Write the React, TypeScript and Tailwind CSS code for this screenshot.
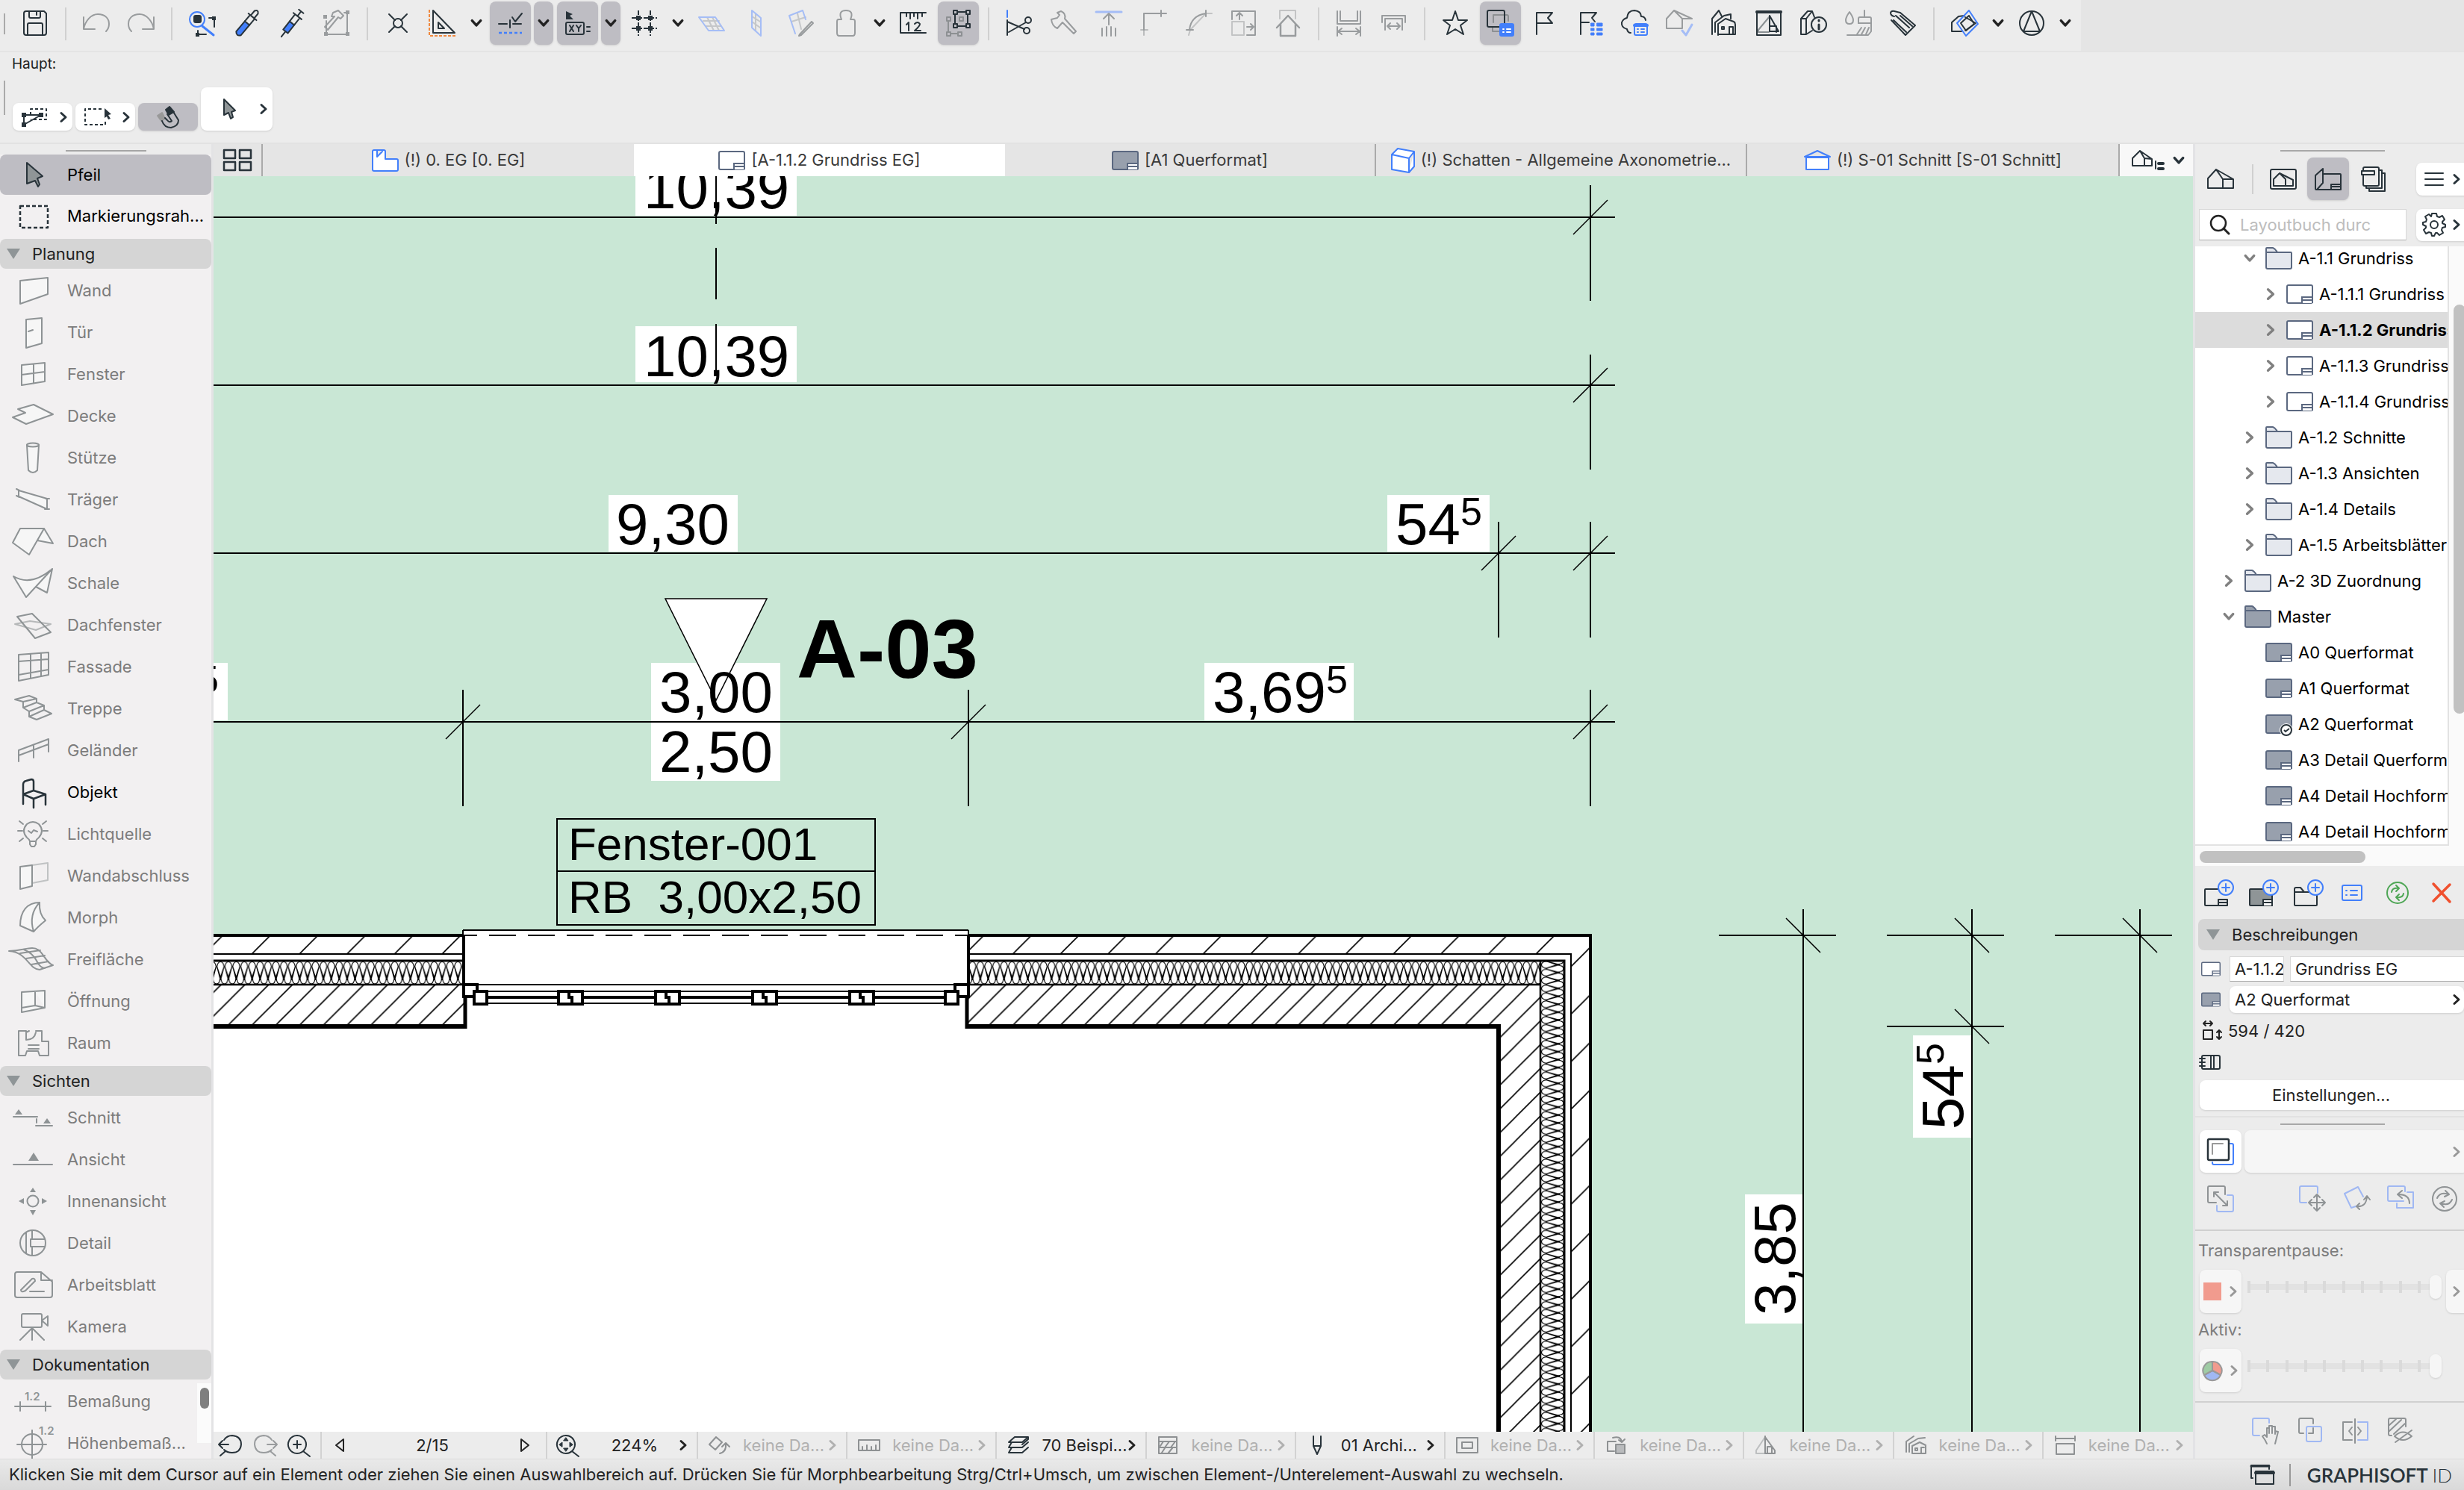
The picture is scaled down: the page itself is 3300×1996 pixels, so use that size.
import type { ReactNode } from "react";

type IconProps = { children: ReactNode; box?: string; className?: string };

function Icon({ children, box = "0 0 36 36", className = "w-9 h-9" }: IconProps) {
  return (
    <svg
      viewBox={box}
      className={`${className} shrink-0 overflow-visible`}
      fill="none"
      stroke="currentColor"
      strokeWidth="2"
      strokeLinejoin="round"
      strokeLinecap="round"
      aria-hidden="true"
    >
      {children}
    </svg>
  );
}

const BLUE = "#427ffb";
const GRAY = "#999c9e";
const DARK = "#28333a";

function Chevron({ down = false, className = "w-3 h-3.5" }: { down?: boolean; className?: string }) {
  return (
    <Icon box="0 0 12 14" className={className}>
      <path d={down ? "M1 4 L6 9.5 L11 4" : "M3 1.5 L9 7 L3 12.5"} strokeWidth="3" />
    </Icon>
  );
}

/* ---------- top toolbar ---------- */

type Tool = { kind?: "icon" | "chev" | "sep"; name?: string; on?: boolean; off?: boolean; art?: ReactNode };

const sep: Tool = { kind: "sep" };
const chev: Tool = { kind: "chev", name: "Optionen" };

const tools: Tool[] = [
  {
    name: "Sichern",
    art: (
      <path d="M6 2H30L33 5V31Q33 34 30 34H6Q3 34 3 31V5Q3 2 6 2ZM10 2V9Q10 11 12 11H23Q25 11 25 9V2M20 3V7M8 34V20Q8 18 10 18H26Q28 18 28 20V34" />
    ),
  },
  sep,
  { name: "Widerrufen", off: true, art: <path d="M1 10V26H16M1 26C3 15 11 6 20 6C30 6 35 12 35 19Q35 25 31 29" /> },
  { name: "Wiederholen", off: true, art: <path d="M35 10V26H20M35 26C33 15 25 6 16 6C6 6 1 12 1 19Q1 25 5 29" /> },
  sep,
  {
    name: "Suchen und Aktivieren",
    art: (
      <>
        <circle cx="11" cy="13" r="10" stroke={BLUE} />
        <path d="M18 22L33 34" stroke={BLUE} strokeWidth="3" />
        <rect x="7" y="8" width="9" height="9" rx="2" fill={DARK} />
        <path d="M27 11H34V23M12 28V33H23" />
        <path d="M31 9H36V14H31ZM9 31H14V36H9Z" fill={DARK} stroke="none" />
      </>
    ),
  },
  {
    name: "Parameter aufnehmen",
    art: (
      <g transform="rotate(40 18 18)">
        <path d="M14 18H22V36Q18 41 14 36Z" fill={BLUE} />
        <path d="M14 18V7H22V18M11 7H25M15 7V-1Q18 -6 21 -1V7" />
      </g>
    ),
  },
  {
    name: "Parameter übertragen",
    art: (
      <g transform="rotate(38 18 18)">
        <path d="M14 18H22V32H14Z" fill={BLUE} />
        <path d="M14 18V6H22V18M11 6H25M18 6V-2M14 -2H22M18 32V41" />
      </g>
    ),
  },
  {
    name: "Favorit anwenden",
    off: true,
    art: (
      <>
        <path d="M13 4L20 1L27 8L23 12L20 10L6 27L2 23L15 9L11 9Z" />
        <path d="M4 15V33H32V4H28M32 33V4" />
        <path d="M0 7H5V12H0ZM1 30H6V35H1ZM30 30H35V35H30ZM30 1H35V6H30Z" fill={GRAY} stroke="none" />
      </>
    ),
  },
  sep,
  { name: "Fangpunkte", art: <><circle cx="18" cy="18" r="6" /><path d="M6 6L14 14M30 6L22 14M6 30L14 22M30 30L22 22" /></> },
  {
    name: "Hilfslinien",
    art: (
      <>
        <path d="M5 1L34 31H5ZM12 17L20 25H12Z" />
        <path d="M0 0V35H36" stroke="#f0883e" strokeDasharray="4 2" strokeLinecap="butt" />
      </>
    ),
  },
  chev,
  {
    name: "Fangführung",
    on: true,
    art: (
      <>
        <path d="M3 19H14M22 19H33M18 14V24M21 10L25 16L34 5" />
        <path d="M3 31H34" stroke={BLUE} strokeDasharray="4 3" strokeLinecap="butt" strokeWidth="2.5" />
      </>
    ),
  },
  { ...chev, on: true },
  {
    name: "Tracker",
    on: true,
    art: (
      <>
        <path d="M3 2L12 6L8 8L13 13L3 13Z" fill={DARK} stroke="none" />
        <rect x="3" y="17" width="24" height="16" rx="2" />
        <path d="M8 21L13 29M13 21L8 29M17 21L20 25L23 21M20 25V29M31 23H35M31 29H35" />
      </>
    ),
  },
  { ...chev, on: true },
  {
    name: "Raster",
    art: (
      <>
        <path d="M10 1V35M26 1V35M1 11H35M1 25H35" strokeDasharray="6 2" strokeLinecap="butt" />
        <path d="M7 8H13V14H7ZM23 8H29V14H23ZM7 22H13V28H7ZM23 22H29V28H23Z" fill={DARK} stroke="none" />
      </>
    ),
  },
  chev,
  {
    name: "Bearbeitungsebene",
    off: true,
    art: (
      <>
        <path d="M7 15H28M10 22H31M12 10L21 28M19 10L28 28" stroke="#c5c7c9" />
        <path d="M1 10H23L35 28H14Z" stroke="#a5bdf6" />
      </>
    ),
  },
  {
    name: "Ebene vertikal",
    off: true,
    art: (
      <>
        <path d="M17 6V28M12 9L23 16M12 16L23 24" stroke="#c5c7c9" />
        <path d="M12 1L24 11V35L12 24Z" stroke="#a5bdf6" />
      </>
    ),
  },
  {
    name: "Ebene bearbeiten",
    off: true,
    art: (
      <>
        <path d="M5 16L24 10M13 5L18 26" stroke="#c5c7c9" />
        <path d="M10 32L2 8L20 1L24 13" stroke="#a5bdf6" />
        <path d="M32 16L16 33L15 35L18 34L34 18Z" />
      </>
    ),
  },
  { name: "Schwerkraft", off: true, art: <path d="M12 13Q7 1 18 1Q29 1 24 13H28Q30 13 30 16V31Q30 35 27 35H9Q6 35 6 31V16Q6 13 8 13Z" /> },
  chev,
  {
    name: "Maße",
    art: (
      <>
        <path d="M35 4H1V31H35M9 4V9M14 4V12M19 4V9M24 4V12M30 4V9" />
        <path d="M9 20L12 17V28M20 19Q24 15 27 19Q27 22 20 28H28" />
      </>
    ),
  },
  {
    name: "Transformationsrahmen",
    on: true,
    art: (
      <>
        <g stroke="#8d9093">
          <path d="M3 10H8V15H3ZM3 30H8V35H3ZM18 30H23V35H18ZM20 10H25V15H20ZM5 15V30M8 32H18" />
        </g>
        <path d="M12 1H17V6H12ZM29 1H34V6H29ZM12 19H17V24H12ZM29 19H34V24H29ZM17 3H29M17 22H29M14 6V19M31 6V19" />
      </>
    ),
  },
  sep,
  {
    name: "Trennen",
    art: (
      <>
        <path d="M2 1V10" stroke={BLUE} />
        <circle cx="30" cy="14" r="4" />
        <circle cx="28" cy="28" r="4" />
        <path d="M2 14V34M2 16L25 26M4 30L27 17" />
      </>
    ),
  },
  { name: "Spalten", off: true, art: <path d="M9 4L14 2Q21 5 19 12L34 29L31 32L16 17L9 25Q2 22 1 13L9 11L12 7Z" /> },
  {
    name: "Anpassen",
    off: true,
    art: (
      <>
        <path d="M1 3H35" stroke="#a5bdf6" strokeWidth="3" />
        <path d="M18 20V6M11 12L18 5L25 12M9 25V35M15 23V35M21 23V35M27 25V35" />
      </>
    ),
  },
  { name: "Verbinden", off: true, art: <><path d="M1 27H10M5 34V27" opacity="0.6" /><path d="M5 27V5H35M28 1V9" /></> },
  { name: "Abrunden", off: true, art: <><path d="M5 34L7 27L28 5H36" opacity="0.5" /><path d="M2 27H11M6 27Q8 8 28 5M28 1V9" /></> },
  {
    name: "Größe ändern",
    off: true,
    art: (
      <>
        <path d="M3 16H19V34H3Z" opacity="0.5" />
        <path d="M3 13V2H34V34H23M13 13V4M9 8L13 4L17 8M23 23H32M28 19L32 23L28 27" />
      </>
    ),
  },
  { name: "Dach trimmen", off: true, art: <><path d="M7 12V1H28V12" opacity="0.5" /><path d="M3 24L18 8L33 24M8 19V35H28V19" strokeWidth="2.5" /></> },
  sep,
  { name: "Ausrichten", off: true, art: <path d="M2 2V19H33V2M6 2V15H29V2M2 23V35M33 23V35M3 29H32M8 25L3 29L8 33M27 25L32 29L27 33" /> },
  { name: "Verteilen", off: true, art: <path d="M2 17V8H33V17M6 27V12H29V27M9 22H26M13 18L9 22L13 26M22 18L26 22L22 26" /> },
  sep,
  { name: "Favoriten", art: <path d="M18 2L22 14H34L25 21L29 33L18 26L7 33L11 21L2 14H14Z" /> },
  {
    name: "Elementinformation",
    on: true,
    art: (
      <>
        <path d="M17 7H9V17M9 7H27Q29 7 29 9V15" stroke="#8d9093" />
        <path d="M8 23V29H17" stroke="#8d9093" />
        <rect x="1" y="1" width="23" height="22" rx="2" />
        <rect x="18" y="19" width="18" height="16" rx="2" fill={BLUE} stroke={BLUE} />
        <path d="M22 26H23M27 26H32M22 30H23M27 30H32" stroke="#fff" />
      </>
    ),
  },
  { name: "Markierung", art: <path d="M7 33V4H28L22 11L28 18H8" /> },
  {
    name: "Markierungsliste",
    art: (
      <>
        <path d="M6 33V4H27L21 11L25 16M7 17H17" />
        <path d="M20 18H24V22H20ZM28 18H35V22H28ZM20 25H24V28H20ZM28 25H35V28H28ZM20 31H24V34H20ZM28 31H35V34H28Z" fill={BLUE} stroke={BLUE} strokeWidth="1" />
      </>
    ),
  },
  {
    name: "BIMcloud",
    art: (
      <>
        <path d="M13 31Q9 31 8 26Q0 24 1 17Q3 12 8 11Q9 1 18 1Q27 2 27 9Q32 9 33 14" />
        <rect x="18" y="19" width="17" height="15" rx="2" stroke={BLUE} />
        <path d="M18 21H35" stroke={BLUE} strokeWidth="4" />
        <path d="M22 26H23M27 26H31M22 30H23M27 30H31" stroke={BLUE} />
      </>
    ),
  },
  {
    name: "Modellprüfung",
    off: true,
    art: (
      <>
        <path d="M1 12L11 1L22 12V25H1ZM11 1L35 12L22 12" />
        <path d="M22 28L27 34L35 20" stroke="#a5bdf6" strokeWidth="3" />
      </>
    ),
  },
  { name: "Hausoptionen", art: <path d="M2 33V12L11 1L15 9M6 30V17L18 8L27 6V12M10 34V19L20 12L31 16Q33 17 33 20V33H10ZM15 23H18V26H15ZM25 33V23H30V33" /> },
  {
    name: "Grundriss-Vorschau",
    art: (
      <>
        <path d="M2 2H34V34H2Z" />
        <path d="M2 3H34" strokeWidth="4" />
        <path d="M19 9L4 27V30H18" opacity="0.5" />
        <path d="M19 8V29H31L19 8M19 22H28V30" />
      </>
    ),
  },
  {
    name: "Etagen-Info",
    art: (
      <>
        <path d="M1 12L10 2H16L8 12V33H1ZM1 12H8M16 2L19 10M8 33L16 28" />
        <circle cx="25" cy="20" r="10" />
        <path d="M25 14V15M25 20V26" strokeWidth="3" />
      </>
    ),
  },
  { name: "Oberfläche", off: true, art: <><path d="M6 3Q1 10 1 14Q1 19 6 19Q11 19 11 14Q11 10 6 3ZM26 1V10M18 18V12Q18 10 20 10H33Q35 10 35 12V29L31 34H3" /><path d="M18 18H35M22 24L16 33M27 24L22 33M32 24L28 33" /></> },
  { name: "Etiketten", art: <path d="M6 9Q1 8 1 4Q2 1 6 2M6 2L14 4L34 21L21 34L2 14M8 8L26 24M14 8L30 22M5 14L22 30" /> },
  sep,
  {
    name: "3D-Schnitt",
    art: (
      <>
        <path d="M10 9L1 17V29L14 29M10 9L18 8M19 10L33 18L19 28" />
        <path d="M24 1L36 19L20 35L8 18Z" stroke={BLUE} />
        <path d="M24 8L31 19L20 28L13 18Z" />
      </>
    ),
  },
  chev,
  { name: "Zeichen", art: <><circle cx="18" cy="18" r="16" /><path d="M18 2L29 29H7Z" /></> },
  chev,
];

function Toolbar() {
  return (
    <div className="flex h-[70px] shrink-0 border-b-2 border-[#e4e4e4] bg-[#e5e5e5]">
      <div className="flex items-start bg-[#ececec] pr-1.5 pt-0.5">
        <span className="ml-[5px] mt-4 h-7 w-0.5 bg-[#aaa]" />
        <div className="ml-2.5 flex">
          {tools.map((t, i) => {
            if (t.kind === "sep") {
              return (
                <span key={i} className="flex w-[22px] justify-center pt-2">
                  <span className="h-11 w-0.5 bg-[#d0d0d0]" />
                </span>
              );
            }
            const on = t.on ? "bg-[#bebdc3] shadow-sm" : "";
            if (t.kind === "chev") {
              return (
                <span key={i} className="flex w-[30px] justify-center">
                  <button aria-label={t.name} className={`flex h-[58px] w-[26px] items-center justify-center rounded-lg text-[#222] ${on}`}>
                    <Chevron down className="w-3.5 h-4" />
                  </button>
                </span>
              );
            }
            return (
              <span key={i} className="flex w-[60px] justify-center">
                <button
                  aria-label={t.name}
                  disabled={t.off}
                  className={`flex h-[58px] w-[55px] items-center justify-center rounded-lg ${on} ${t.off ? "text-[#999c9e]" : "text-[#28333a]"}`}
                >
                  <Icon>{t.art}</Icon>
                </button>
              </span>
            );
          })}
        </div>
      </div>
    </div>
  );
}

function InfoBar() {
  return (
    <div className="flex h-[123px] shrink-0 flex-col border-b-2 border-[#e2e2e2] bg-[#ececec]">
      <p className="h-9 pl-4 pt-1 text-[19px] leading-6">Haupt:</p>
      <div className="flex items-start gap-1">
        <span className="ml-[5px] mr-1.5 mt-0.5 h-[46px] w-0.5 bg-[#aaa]" />
        <button aria-label="Auswahlmethode" className="mt-8 flex h-[37px] w-20 items-center justify-between rounded-lg bg-white pl-3 pr-1.5 text-[#28333a] shadow">
          <Icon box="0 0 34 26" className="w-[34px] h-[26px]">
            <path d="M12 10V2H33V16H12" strokeDasharray="4 3" strokeLinecap="butt" />
            <path d="M3 10H26M3 10V23L26 10" />
            <path d="M0 7H6V13H0ZM23 7H29V13H23ZM0 20H6V26H0Z" fill={DARK} stroke="none" />
          </Icon>
          <Chevron />
        </button>
        <button aria-label="Markierung" className="mt-8 flex h-[37px] w-20 items-center justify-between rounded-lg bg-white pl-3 pr-1.5 text-[#28333a] shadow">
          <Icon box="0 0 38 26" className="w-[38px] h-[26px]">
            <path d="M23 2H1V23H28V16" strokeDasharray="4 3" strokeLinecap="butt" />
            <path d="M27 1L36 9L32 10L35 15L32 16L30 12L27 14Z" fill={DARK} stroke="none" />
          </Icon>
          <Chevron />
        </button>
        <button aria-label="Magnet" className="mt-8 flex h-[37px] w-20 items-center justify-center rounded-lg bg-[#bebdc3] text-[#28333a] shadow-sm">
          <Icon box="0 0 32 32" className="w-8 h-8">
            <path d="M2 14L8 10L12 18L7 21Z" fill="#999" stroke="#999" />
            <path d="M8 21Q11 30 20 30Q30 28 30 20L22 7L15 12L21 21Q18 24 15 20L12 17" />
            <path d="M13 6L18 2L24 9L17 13Z" fill={DARK} />
          </Icon>
        </button>
        <button aria-label="Pfeil" className="mt-[11px] flex h-[58px] w-24 items-center justify-between rounded-lg bg-white pl-[29px] pr-1.5 text-[#28333a] shadow">
          <Icon box="0 0 18 30" className="w-[18px] h-[30px]">
            <path d="M2 2L17 17L12 19L14 26L11 28L8 20L2 23Z" fill="#8f9597" />
          </Icon>
          <Chevron />
        </button>
      </div>
    </div>
  );
}

/* ---------- tool box on the left ---------- */

type BoxItem = { label: string; active?: boolean; selected?: boolean; art: ReactNode };

const soft = "#f6f6f6";

const planning: BoxItem[] = [
  { label: "Wand", art: <path d="M13 9L50 5V27L13 40Z" fill={soft} /> },
  { label: "Tür", art: <path d="M21 5L42 3V37L21 43ZM24 21L30 19" fill={soft} /> },
  { label: "Fenster", art: <path d="M15 10L46 7V32L15 37ZM31 9V35M15 23L46 19" fill={soft} /> },
  { label: "Decke", art: <path d="M3 24L20 18L10 13L31 7L57 20L21 33Z" fill={soft} /> },
  { label: "Stütze", art: <><path d="M22 5L24 39Q30 45 36 39L38 5" fill={soft} /><ellipse cx="30" cy="5" rx="8" ry="2.5" /></> },
  { label: "Träger", art: <path d="M8 8L12 10M8 17L12 19M11 10L49 21V35L11 18ZM47 21H52M46 35H52" fill={soft} /> },
  { label: "Dach", art: <path d="M3 24L13 5H45L25 40ZM45 5L57 25L36 21" fill={soft} /> },
  { label: "Schale", art: <path d="M4 13Q28 27 56 3L21 41ZM56 3L49 35L34 27" fill={soft} /> },
  { label: "Dachfenster", art: <><path d="M6 21L26 17L54 21L34 29Z" opacity="0.6" /><path d="M9 11L29 7L54 32L33 40Z" /></> },
  { label: "Fassade", art: <path d="M11 6L51 3V33L11 41ZM27 5V38M41 4V35M11 15L51 12M11 33L51 26" /> },
  { label: "Treppe", art: <path d="M6 10L25 5L35 9V14L45 18V24L55 29L35 37L25 33V26L17 21V13ZM17 13L35 9M17 21L35 14M25 26L45 18M25 33L45 24" /> },
  { label: "Geländer", art: <path d="M11 37V22L51 7V24M11 29L51 14M31 15V32" /> },
  { label: "Objekt", active: true, art: <path d="M17 38V12Q17 8 21 7L28 5Q31 5 31 8V20M17 25L31 20L47 25L31 31ZM47 25V39M31 31V43" strokeWidth="2.5" /> },
  { label: "Lichtquelle", art: <path d="M26 32Q25 29 22 27Q14 18 22 9Q30 3 38 9Q46 18 38 27Q35 29 34 32ZM26 32V36L28 39H32L34 36V32M24 18L28 21L31 17L36 19M12 5L17 9M10 18H16M12 32L17 28M48 5L43 9M50 18H44M48 32L43 28" /> },
  { label: "Wandabschluss", art: <><path d="M29 8L50 5V28L29 32" opacity="0.5" /><path d="M13 10L29 8V36L13 40Z" fill={soft} /></> },
  { label: "Morph", art: <path d="M39 2C22 2 13 14 13 33L31 41Q36 35 47 26Q38 18 39 2ZM39 2Q24 18 31 41" fill={soft} /> },
  { label: "Freifläche", art: <path d="M-2 11C14 11 20 7 29 7C44 7 45 26 57 30L39 36C25 36 22 12 -2 11ZM13 14L40 10M21 21L46 17M28 29L51 25M18 9Q30 14 35 24T46 34" /> },
  { label: "Öffnung", art: <path d="M15 10L46 8V31L15 37ZM33 9V28L46 31M33 28L15 31" fill={soft} /> },
  { label: "Raum", art: <path d="M12 6H21V18Q32 18 34 8M21 8L25 6M34 6H42V20H51V39H39L37 33H22L20 39H11V6M24 25H38M24 30H38" /> },
];

const views: BoxItem[] = [
  { label: "Schnitt", art: <><path d="M4 21H36M35 24V29M34 33H56" /><path d="M6 18L11 11L16 18ZM44 30L49 23L54 30Z" fill="currentColor" stroke="none" /></> },
  { label: "Ansicht", art: <><path d="M4 29H56" /><path d="M24 24L31 13L38 24Z" fill="currentColor" stroke="none" /></> },
  { label: "Innenansicht", art: <><circle cx="30" cy="22" r="7.5" /><path d="M26 10L30 4L34 10ZM26 34L30 41L34 34ZM18 18L11 22L18 26ZM42 18L49 22L42 26Z" fill="currentColor" stroke="none" /></> },
  { label: "Detail", art: <><circle cx="30" cy="22" r="17" /><path d="M21 8V36M29 5V17M29 27V39M46 17H27V27H46" /></> },
  { label: "Arbeitsblatt", art: <path d="M9 5H41L56 18V36Q56 39 53 39H9Q6 39 6 36V8Q6 5 9 5ZM41 5V16H56M14 29L29 14Q33 13 33 17L20 30Q14 33 14 29ZM26 31H45" /> },
  { label: "Kamera", art: <><rect x="15" y="5" width="27" height="18" rx="2" /><path d="M42 14L50 8V21ZM29 24V40M29 24L13 40M29 24L45 40" /></> },
];

const docs: BoxItem[] = [
  {
    label: "Bemaßung",
    art: (
      <>
        <path d="M6 29H54M13 23V35M47 23V35" />
        <text x="19" y="21" fontSize="15" fill="currentColor" stroke="none" fontWeight="600">1.2</text>
      </>
    ),
  },
  {
    label: "Höhenbemaß...",
    art: (
      <>
        <circle cx="29" cy="24" r="14" />
        <path d="M9 24H48M29 5V44" />
        <text x="38" y="11" fontSize="15" fill="currentColor" stroke="none" fontWeight="600">1.2</text>
      </>
    ),
  },
];

function BoxRow({ item }: { item: BoxItem }) {
  const tone = item.active ? "text-black" : "text-[#7c7c7c]";
  return (
    <button className={`flex w-full items-center gap-4 pl-3.5 text-[22px] ${item.selected ? "h-[54px] rounded-lg bg-[#bebdc3]" : "h-14"} ${tone}`}>
      <span className={item.active ? "text-[#28333a]" : "text-[#8e9395]"}>
        <Icon box="0 0 60 44" className="w-[60px] h-11">{item.art}</Icon>
      </span>
      <span className="whitespace-nowrap">{item.label}</span>
    </button>
  );
}

function BoxHeader({ children }: { children: ReactNode }) {
  return (
    <button className="mb-px mt-[3px] flex h-10 w-full items-center gap-4 rounded-lg bg-[#d5d5d5] pl-[9px] text-[22px] text-[#222]">
      <Icon box="0 0 18 14" className="w-[18px] h-3.5">
        <path d="M0 0H18L9 14Z" fill="#8f9597" stroke="none" />
      </Icon>
      {children}
    </button>
  );
}

function ToolBox() {
  return (
    <aside className="flex w-[286px] shrink-0 flex-col overflow-hidden border-r-[3px] border-[#e3e3e5] bg-[#f2f0f1]">
      <div className="flex h-3.5 shrink-0 items-center justify-center bg-[#ececec] pt-1">
        <span className="h-0.5 w-[108px] bg-[#a5a5a5]" />
      </div>
      <BoxRow
        item={{
          label: "Pfeil",
          active: true,
          selected: true,
          art: <path d="M22 6L43 24L36 27L39 35L37 38L33 30L22 34Z" fill="#8f9597" />,
        }}
      />
      <BoxRow
        item={{
          label: "Markierungsrah...",
          active: true,
          art: <path d="M13 9H50V38H13Z" strokeDasharray="5 3" strokeWidth="2.5" strokeLinecap="butt" />,
        }}
      />
      <BoxHeader>Planung</BoxHeader>
      {planning.map((p) => <BoxRow key={p.label} item={p} />)}
      <BoxHeader>Sichten</BoxHeader>
      {views.map((v) => <BoxRow key={v.label} item={v} />)}
      <BoxHeader>Dokumentation</BoxHeader>
      <div className="flex min-h-0 flex-1">
        <div className="flex-1">
          {docs.map((d) => <BoxRow key={d.label} item={d} />)}
        </div>
        <div className="mt-1 h-20 w-[19px] bg-[#fbfbfb] pl-1 pt-1.5">
          <div className="h-7 w-3 rounded-full bg-[#7f7f7f]" />
        </div>
      </div>
    </aside>
  );
}

/* ---------- tabs ---------- */

function SheetIcon({ filled = false, className = "w-9 h-[26px]" }: { filled?: boolean; className?: string }) {
  return (
    <svg viewBox="0 0 36 26" className={`${className} shrink-0`} fill="none" stroke="#5b6880" strokeWidth="2" aria-hidden="true">
      <rect x="1" y="1" width="34" height="24" rx="2" fill={filled ? "#98a0ad" : "#fff"} />
      <path d="M21 25V17H35V25" fill="#fff" />
      <path d="M21 21H35" />
    </svg>
  );
}

const tabs = [
  {
    label: "(!) 0. EG [0. EG]",
    art: (
      <Icon className="w-9 h-[30px]" box="0 0 36 30">
        <path d="M1 3Q1 1 3 1H16Q18 1 18 3V13H33Q35 13 35 15V27Q35 29 33 29H3Q1 29 1 27ZM7 1V10L14 3" stroke={BLUE} fill="#fff" />
      </Icon>
    ),
  },
  { label: "[A-1.1.2 Grundriss EG]", active: true, art: <SheetIcon /> },
  { label: "[A1 Querformat]", art: <SheetIcon filled /> },
  {
    label: "(!) Schatten - Allgemeine Axonometrie...",
    art: (
      <Icon className="w-8 h-[34px]" box="0 0 32 34">
        <path d="M1 9L9 1L31 5L24 14L1 9V29L24 33V14M31 5V25L24 33" stroke={BLUE} fill="#fff" />
      </Icon>
    ),
  },
  {
    label: "(!) S-01 Schnitt [S-01 Schnitt]",
    art: (
      <Icon className="w-9 h-7" box="0 0 36 28">
        <path d="M3 10H33V26H3Z" stroke={BLUE} fill="#fff" />
        <path d="M1 9L18 1L35 9Z" stroke={BLUE} />
      </Icon>
    ),
  },
];

function Tabs() {
  return (
    <div className="flex h-[43px] shrink-0 bg-[#e5e5e5] text-[22px] text-[#3a3a3a]">
      <button aria-label="Tab-Übersicht" className="flex w-[66px] shrink-0 items-center justify-center border-r-2 border-[#aaa] text-[#28333a]">
        <Icon box="0 0 38 30" className="w-[38px] h-[30px]">
          <path d="M1 1H16V12H1ZM22 1H37V12H22ZM1 17H16V28H1ZM22 17H37V28H22Z" strokeWidth="2.5" />
        </Icon>
      </button>
      <div className="grid min-w-0 flex-1 grid-cols-5">
        {tabs.map((t, i) => (
          <button
            key={t.label}
            className={`flex min-w-0 items-center justify-center gap-2 whitespace-nowrap ${t.active ? "bg-white" : ""} ${i > 1 && i < 4 ? "border-r-2 border-[#aaa]" : ""}`}
          >
            {t.art}
            {t.label}
          </button>
        ))}
      </div>
      <button aria-label="Ansicht wählen" className="flex w-[100px] shrink-0 items-center justify-between border-l-2 border-[#aaa] bg-[#f8f8f8] pl-4 pr-3 text-[#28333a]">
        <Icon box="0 0 48 28" className="w-12 h-7">
          <path d="M1 21V11L11 1L27 12V21ZM11 1L17 11V21M17 11L27 12M32 15V25" />
          <path d="M36 18H42M36 25H42" strokeWidth="4" />
        </Icon>
        <Chevron down className="w-3.5 h-4" />
      </button>
    </div>
  );
}

/* ---------- floor plan ---------- */

function Tick({ x, y, flip = false }: { x: number; y: number; flip?: boolean }) {
  const s = flip ? -1 : 1;
  return <path d={`M${x - 23} ${y + 23 * s}L${x + 23} ${y - 23 * s}`} strokeWidth="1.5" />;
}

const mullions = [748, 878, 1008, 1138];

function Plan() {
  return (
    <svg
      viewBox="286 236 2651 1682"
      preserveAspectRatio="xMinYMin slice"
      className="block h-full w-full bg-[#c9e7d5] font-['Liberation_Sans',Arial,sans-serif]"
      fill="none"
      stroke="#000"
      strokeWidth="2"
      role="img"
      aria-label="Grundriss EG"
    >
      <defs>
        <pattern id="brick" patternUnits="userSpaceOnUse" x="22.7" y="0" width="63.7" height="63.7">
          <path d="M-10 10L10 -10M-10 73.7L73.7 -10M53.7 73.7L73.7 53.7" stroke="#000" strokeWidth="1.6" />
        </pattern>
        <pattern id="block" patternUnits="userSpaceOnUse" x="22.7" y="0" width="31.85" height="31.85">
          <path d="M-10 10L10 -10M-10 41.85L41.85 -10M21.85 41.85L41.85 21.85" stroke="#000" strokeWidth="1.6" />
        </pattern>
        <pattern id="wool" patternUnits="userSpaceOnUse" x="1297" y="1287" width="10.6" height="32">
          <path d="M0.6 8Q1.5 1.5 5.3 1.5Q9.1 1.5 10 8M0.6 8L5.3 26M10 8L5.3 26M-4.7 24Q-4 31 0 31Q4 31 4.7 24L10 8M5.9 24Q6.6 31 10.6 31Q14.6 31 15.3 24M5.9 24L0.6 8" stroke="#000" strokeWidth="1.2" fill="none" />
        </pattern>
        <pattern id="woolUp" patternUnits="userSpaceOnUse" x="2063" y="1287" width="32" height="10.6">
          <path d="M8 0.6Q1.5 1.5 1.5 5.3Q1.5 9.1 8 10M8 0.6L26 5.3M8 10L26 5.3M24 -4.7Q31 -4 31 0Q31 4 24 4.7L8 10M24 5.9Q31 6.6 31 10.6Q31 14.6 24 15.3M24 5.9L8 0.6" stroke="#000" strokeWidth="1.2" fill="none" />
        </pattern>
      </defs>

      {/* walls */}
      <path d="M280 1253H2130V1930H280Z" fill="#fff" stroke="none" />
      <path d="M280 1253H2130V1930H2104V1278H280Z" fill="url(#brick)" stroke="none" />
      <path d="M280 1319H2063V1930H2007V1375H280Z" fill="url(#block)" stroke="none" />
      <path d="M280 1287H2063V1319H280Z" fill="url(#wool)" stroke="none" />
      <path d="M2063 1287H2095V1930H2063Z" fill="url(#woolUp)" stroke="none" />
      <path d="M280 1253H2130V1930" strokeWidth="4" />
      <path d="M280 1278H2104V1930" />
      <path d="M280 1287H2095V1930" strokeWidth="3" />
      <path d="M280 1319H2063V1930M2063 1287V1319" strokeWidth="2.5" />
      <path d="M280 1375H2007V1930" strokeWidth="6" />

      {/* window */}
      <path d="M621 1246H1297V1380H621Z" fill="#fff" stroke="none" />
      <path d="M620 1246H1297M620 1319H1297M620 1246V1253M1297 1246V1253" />
      <path d="M621 1253V1336M1297 1253V1336" strokeWidth="4" />
      <path d="M621 1319H639V1335H621ZM1279 1319H1297V1335H1279Z" strokeWidth="4" />
      <path d="M623 1334V1378M1295 1334V1378" strokeWidth="5" />
      <path d="M620 1253H1297" strokeDasharray="36 16" strokeDashoffset="17" />
      <path d="M652 1328H1266M652 1344H1266" />
      <path d="M652 1336H1266" strokeWidth="4" />
      <g fill="#fff" strokeWidth="4">
        <path d="M635 1328H652V1345H635ZM1266 1328H1283V1345H1266Z" />
        {mullions.map((x) => (
          <g key={x}>
            <rect x={x} y="1328" width="32" height="17" />
            <path d={`M${x + 14} 1328V1336H${x + 18}V1345`} />
          </g>
        ))}
      </g>

      {/* label backgrounds */}
      <g fill="#fff" stroke="none">
        <path d="M851 230H1067V289H851ZM851 437H1067V512H851ZM815 663H988V739H815ZM1858 663H1995V739H1858Z" />
        <path d="M872 888H1045V1046H872ZM1613 888H1813V965H1613ZM280 888H305V965H280Z" />
        <path d="M2562 1387H2640V1524H2562ZM2337 1600H2414V1773H2337Z" />
      </g>

      {/* horizontal dimension chains */}
      <path d="M280 291H2163M280 516H2163M280 741H2163M280 967H2163" />
      <path d="M2130 248V403M2130 475V629M2130 699V854M2130 924V1080M2007 699V854M620 924V1080M1297 924V1080" />
      <Tick x={2130} y={291} />
      <Tick x={2130} y={516} />
      <Tick x={2130} y={741} />
      <Tick x={2130} y={967} />
      <Tick x={2007} y={741} />
      <Tick x={620} y={967} />
      <Tick x={1297} y={967} />
      <path d="M959 236V300M959 332V401M959 434V500" />

      {/* vertical dimension chains */}
      <path d="M2415 1218V1930M2641 1218V1930M2866 1218V1930" />
      <path d="M2302 1253H2459M2527 1253H2684M2752 1253H2909M2527 1375H2684" />
      <Tick x={2415} y={1253} flip />
      <Tick x={2641} y={1253} flip />
      <Tick x={2866} y={1253} flip />
      <Tick x={2641} y={1375} flip />

      {/* view marker */}
      <path d="M891 802H1027L959 938Z" fill="#fff" strokeWidth="1.5" />
      <path d="M746 1097H1172V1239H746ZM746 1167H1172" />

      <g fill="#000" stroke="none" fontSize="78">
        <text x="862" y="279">10,39</text>
        <text x="862" y="504">10,39</text>
        <text x="825" y="729">9,30</text>
        <text x="1869" y="729">54</text>
        <text x="883" y="954">3,00</text>
        <text x="883" y="1034">2,50</text>
        <text x="1624" y="954">3,69</text>
        <text transform="translate(2629 1513) rotate(-90)">54</text>
        <text transform="translate(2404 1762) rotate(-90)">3,85</text>
      </g>
      <g fill="#000" stroke="none" fontSize="52">
        <text x="1956" y="703">5</text>
        <text x="1776" y="928">5</text>
        <text x="264" y="928">5</text>
        <text transform="translate(2603 1426) rotate(-90)">5</text>
      </g>
      <g fill="#000" stroke="none" fontSize="62">
        <text x="761" y="1152">Fenster-001</text>
        <text x="761" y="1223">{"RB\u00a0\u00a03,00x2,50"}</text>
      </g>
      <text x="1067" y="908" fill="#000" stroke="none" fontSize="112" fontWeight="700">A-03</text>
    </svg>
  );
}

/* ---------- bar below the plan ---------- */

const quick: { label: string; on?: boolean; art: ReactNode }[] = [
  { label: "keine Da...", art: <path d="M10 2L18 9L9 19L1 12ZM15 24Q24 22 23 11M18 15L23 10L28 15" /> },
  { label: "keine Da...", art: <path d="M1 6H29V20H1ZM6 20V15M12 20V13M18 20V15M24 20V13" /> },
  { label: "70 Beispi...", on: true, art: <path d="M10 2H28L20 9H2ZM6 9L2 16H20L28 9M6 16L2 23H20L28 16M28 2V5L20 12" /> },
  { label: "keine Da...", art: <path d="M2 2H26V24H2ZM2 8H26M2 16H26M8 8L4 14M16 8L10 16M24 8L18 16M10 17L6 23M20 17L15 23" /> },
  { label: "01 Archi...", on: true, art: <path d="M9 1V14L14 25L19 14V1M9 14H19" /> },
  { label: "keine Da...", art: <path d="M1 3H29V23H1ZM8 9H22V17H8Z" /> },
  { label: "keine Da...", art: <><path d="M12 21H3V8H14M10 3Q20 0 22 8M18 6L22 9L26 5" /><path d="M14 12H26V24H14Z" fill="#b9bbbd" /></> },
  { label: "keine Da...", art: <><path d="M14 2L2 20V24H14" opacity="0.5" /><path d="M14 1V24H27V20L14 2M17 24V15H23V24" /></> },
  { label: "keine Da...", art: <path d="M2 22V8L12 1M6 22V11L18 4L27 3M10 24V14L20 9L28 13V24ZM14 17H17V20H14ZM22 24V16H26" /> },
  { label: "keine Da...", art: <path d="M2 4H28M2 1V7M28 1V7M3 11H27V25H3Z" /> },
];

function ViewBar() {
  return (
    <div className="flex h-9 shrink-0 bg-[#ececec] text-[22px] text-[#222]">
      <div className="flex w-[145px] shrink-0 items-center justify-between border-r-2 border-[#d2d2d2] pl-1.5 pr-3 text-[#28333a]">
        <button aria-label="Vorheriger Ausschnitt">
          <Icon box="0 0 33 30" className="w-[33px] h-[30px]">
            <path d="M8 8Q12 2 19 2Q31 3 31 14Q30 25 19 25Q12 25 8 21M1 14H14M6 9L1 14L6 19M10 23L3 29" />
          </Icon>
        </button>
        <button aria-label="Nächster Ausschnitt" disabled className="text-[#999c9e]">
          <Icon box="0 0 33 30" className="w-[33px] h-[30px]">
            <path d="M25 8Q21 2 14 2Q2 3 2 14Q3 25 14 25Q21 25 25 21M32 14H19M27 9L32 14L27 19M23 23L30 29" />
          </Icon>
        </button>
        <button aria-label="Vergrößern">
          <Icon box="0 0 32 30" className="w-8 h-[30px]">
            <path d="M13 2A12 12 0 1 1 12.9 2M21 23L30 30M13 9V19M8 14H18" />
          </Icon>
        </button>
      </div>
      <div className="flex w-[302px] shrink-0 items-center justify-between border-r-2 border-[#d2d2d2] pl-[18px] pr-[22px]">
        <button aria-label="Zurück">
          <Icon box="0 0 12 18" className="w-3 h-[18px]"><path d="M11 1V17L1 9Z" /></Icon>
        </button>
        <span>2/15</span>
        <button aria-label="Weiter">
          <Icon box="0 0 12 18" className="w-3 h-[18px]"><path d="M1 1V17L11 9Z" /></Icon>
        </button>
      </div>
      <div className="flex w-[202px] shrink-0 items-center justify-between border-r-2 border-[#d2d2d2] px-3">
        <button aria-label="Einpassen" className="text-[#28333a]">
          <Icon box="0 0 31 30" className="w-[31px] h-[30px]">
            <path d="M13 2A12 12 0 1 1 12.9 2M21 23L30 30" />
            <path d="M13 5L16 9H10ZM13 23L16 19H10ZM4 14L8 11V17ZM22 14L18 11V17Z" fill={DARK} strokeWidth="1" />
          </Icon>
        </button>
        <button className="flex items-center gap-7">224% <Chevron /></button>
      </div>
      <div className="grid min-w-0 flex-1 grid-cols-10">
        {quick.map((q, i) => (
          <button
            key={i}
            className={`flex min-w-0 items-center whitespace-nowrap border-[#d2d2d2] pl-3.5 pr-3 ${i < quick.length - 1 ? "border-r-2" : ""} ${q.on ? "text-[#222]" : "text-[#b0b0b0]"}`}
          >
            <span className={q.on ? "text-[#28333a]" : "text-[#8e9193]"}>
              <Icon box="0 0 30 26" className="w-[30px] h-[26px]">{q.art}</Icon>
            </span>
            <span className="ml-4 mr-auto">{q.label}</span>
            <Chevron />
          </button>
        ))}
      </div>
    </div>
  );
}

/* ---------- navigator ---------- */

type Node = { label: string; kind: "folder" | "master" | "sheet" | "mastersheet"; level: number; open?: boolean; leaf?: boolean; current?: boolean; used?: boolean };

const nodes: Node[] = [
  { label: "A-1.1 Grundriss", kind: "folder", level: 1, open: true },
  { label: "A-1.1.1 Grundriss", kind: "sheet", level: 2 },
  { label: "A-1.1.2 Grundriss", kind: "sheet", level: 2, current: true },
  { label: "A-1.1.3 Grundriss", kind: "sheet", level: 2 },
  { label: "A-1.1.4 Grundriss", kind: "sheet", level: 2 },
  { label: "A-1.2 Schnitte", kind: "folder", level: 1 },
  { label: "A-1.3 Ansichten", kind: "folder", level: 1 },
  { label: "A-1.4 Details", kind: "folder", level: 1 },
  { label: "A-1.5 Arbeitsblätter", kind: "folder", level: 1 },
  { label: "A-2 3D Zuordnung", kind: "folder", level: 0 },
  { label: "Master", kind: "master", level: 0, open: true },
  { label: "A0 Querformat", kind: "mastersheet", level: 1, leaf: true },
  { label: "A1 Querformat", kind: "mastersheet", level: 1, leaf: true },
  { label: "A2 Querformat", kind: "mastersheet", level: 1, leaf: true, used: true },
  { label: "A3 Detail Querformat", kind: "mastersheet", level: 1, leaf: true },
  { label: "A4 Detail Hochformat", kind: "mastersheet", level: 1, leaf: true },
  { label: "A4 Detail Hochformat", kind: "mastersheet", level: 1, leaf: true },
];

const indents = ["pl-[38px]", "pl-[66px]", "pl-[94px]"];

function NodeIcon({ node }: { node: Node }) {
  if (node.kind === "folder" || node.kind === "master") {
    return (
      <svg viewBox="0 0 36 30" className="h-[30px] w-9 shrink-0" fill={node.kind === "master" ? "#98a0ad" : "#e5e8ee"} stroke="#5b6880" strokeWidth="2" strokeLinejoin="round" aria-hidden="true">
        <path d="M1 7V2Q1 1 2 1H10Q13 2 16 7Z" />
        <path d="M1 7H34Q35 7 35 8V27Q35 29 33 29H3Q1 29 1 27Z" />
      </svg>
    );
  }
  if (node.used) {
    return (
      <svg viewBox="0 0 36 26" className="h-[26px] w-9 shrink-0 overflow-visible" fill="none" strokeWidth="2" aria-hidden="true">
        <rect x="1" y="1" width="34" height="24" rx="2" fill="#98a0ad" stroke="#5b6880" />
        <circle cx="28" cy="21" r="9" fill="#fff" />
        <circle cx="28" cy="21" r="7" stroke={DARK} fill="#fff" />
        <path d="M25 21L27 23L32 19" stroke={DARK} />
      </svg>
    );
  }
  return <SheetIcon filled={node.kind === "mastersheet"} />;
}

function Tree() {
  return (
    <div className="flex h-[803px] shrink-0 bg-[#fafafa]">
      <ul className="flex min-w-0 flex-1 flex-col overflow-hidden border-b-2 border-r-2 border-[#e2e2e2] bg-white text-[22px] text-black">
        {nodes.map((n, i) => (
          <li key={i} className={`h-12 shrink-0 ${i === 0 ? "-mt-2" : ""} ${n.current ? "bg-[#dcdcdc] font-bold" : ""}`}>
            <button className={`flex h-full w-full items-center whitespace-nowrap ${indents[n.level]}`}>
              <span className="flex w-7 shrink-0 text-[#808080]">{!n.leaf && <Chevron down={n.open} className="w-3.5 h-4" />}</span>
              <NodeIcon node={n} />
              <span className="ml-2">{n.label}</span>
            </button>
          </li>
        ))}
      </ul>
      <div className="w-5 shrink-0 overflow-hidden pl-1.5 pt-[78px]">
        <div className="h-[548px] w-4 rounded-full bg-[#c1c1c1]" />
      </div>
    </div>
  );
}

function PlusBadge() {
  return (
    <g stroke={BLUE}>
      <circle cx="29" cy="11" r="10" fill="#ececec" />
      <path d="M29 6V16M24 11H34" />
    </g>
  );
}

function OpacitySlider({ id, label }: { id: string; label: string }) {
  return (
    <div className="relative mt-[7px] h-8 w-[260px] shrink-0">
      <div className="absolute inset-x-0 top-3 h-2 bg-[#e2e2e2]" />
      <div className="absolute left-0 top-2 flex h-4 w-[232px] justify-between">
        {Array.from({ length: 10 }, (_, i) => <span key={i} className="w-1 bg-[#dadada]" />)}
      </div>
      <input
        id={id}
        aria-label={label}
        type="range"
        defaultValue={100}
        className="absolute inset-0 h-8 w-full appearance-none bg-transparent [&::-webkit-slider-thumb]:h-8 [&::-webkit-slider-thumb]:w-4 [&::-webkit-slider-thumb]:appearance-none [&::-webkit-slider-thumb]:rounded-full [&::-webkit-slider-thumb]:bg-[#f6f6f6] [&::-webkit-slider-thumb]:shadow"
      />
    </div>
  );
}

function Navigator() {
  return (
    <aside className="flex w-[363px] shrink-0 flex-col overflow-hidden border-l-[3px] border-[#e3e3e5] bg-[#ececec] text-[22px] text-[#222]">
      <div className="flex h-[18px] shrink-0 items-center justify-center pl-2">
        <span className="h-0.5 w-[140px] bg-[#a8a8a8]" />
      </div>
      <div className="flex h-[57px] shrink-0 items-center pl-4 text-[#28333a]">
        <button aria-label="Projekt-Mappe">
          <Icon box="0 0 36 28" className="w-9 h-7">
            <path d="M1 26V13L12 1L35 14V26ZM12 1L21 14V26M21 14L35 14" />
          </Icon>
        </button>
        <span className="ml-6 h-10 w-0.5 bg-[#d0d0d0]" />
        <button aria-label="Ausschnitt-Mappe" className="ml-[22px]">
          <Icon box="0 0 36 28" className="w-9 h-7">
            <rect x="1" y="1" width="34" height="26" rx="2" />
            <path d="M5 23V14L13 6L31 15V23ZM13 6L21 14V23" />
          </Icon>
        </button>
        <button aria-label="Layoutbuch" className="ml-3.5 flex h-[57px] w-14 items-center justify-center rounded-lg bg-[#bebdc3] shadow-sm">
          <Icon box="0 0 36 30" className="w-9 h-[30px]">
            <path d="M11 8H34Q35 8 35 9V29H2Q1 29 1 28V10L11 1V20L3 29M22 29V22H35M22 25H35" />
          </Icon>
        </button>
        <button aria-label="Publisher" className="ml-4">
          <Icon box="0 0 33 34" className="w-[33px] h-[34px]">
            <path d="M3 6V3Q3 1 5 1H22Q24 1 24 3V24Q24 26 22 26H5Q3 26 3 24V11M1 6H18V11H1ZM7 26V29H28V5H24M11 29V33H32V9H28" />
          </Icon>
        </button>
        <button aria-label="Navigator-Menü" className="-mr-3 ml-auto flex h-11 w-[76px] shrink-0 items-center gap-3 rounded-lg bg-white pl-3 shadow">
          <Icon box="0 0 24 18" className="w-6 h-[18px]"><path d="M0 1H24M0 9H24M0 17H24" /></Icon>
          <Chevron />
        </button>
      </div>
      <div className="flex h-[62px] shrink-0 items-center justify-between pl-[5px]">
        <label className="mt-1 flex h-[42px] w-[278px] items-center gap-3.5 border border-[#d8d8d8] border-b-[#aaa] bg-white pl-3.5">
          <Icon box="0 0 26 26" className="w-[26px] h-[26px]">
            <circle cx="11" cy="11" r="10" strokeWidth="2.5" />
            <path d="M18 18L25 25" strokeWidth="3" />
          </Icon>
          <input aria-label="Layoutbuch durchsuchen" placeholder="Layoutbuch durc" className="w-[180px] bg-transparent outline-none placeholder:text-[#bdbdbd]" />
        </label>
        <button aria-label="Einstellungen" className="-mr-3 mt-1 flex h-[43px] w-[76px] shrink-0 items-center gap-2 rounded-lg bg-white pl-2 text-[#28333a] shadow">
          <Icon box="0 0 32 32" className="w-8 h-8">
            <circle cx="16" cy="16" r="5" />
            <path d="M13 1H19L20 5L23 6L27 4L30 9L27 12V14L31 16V19L27 20L26 23L28 27L23 30L20 27H18L16 31H13L12 27L9 26L5 28L2 23L5 20V18L1 16V13L5 12L6 9L4 5L9 2L12 5Z" />
          </Icon>
          <Chevron />
        </button>
      </div>
      <Tree />
      <div className="h-[27px] shrink-0 bg-[#fafafa] pl-1.5 pt-[7px]">
        <div className="h-4 w-[222px] rounded-full bg-[#c1c1c1]" />
      </div>
      <div className="flex h-[71px] shrink-0 items-center pl-3 text-[#28333a]">
        <button aria-label="Neues Layout" className="w-[60px]">
          <Icon box="0 0 40 36" className="w-10 h-9">
            <path d="M18 13H2Q1 13 1 14V34Q1 35 2 35H31V27H19V35M19 31H31" />
            <PlusBadge />
          </Icon>
        </button>
        <button aria-label="Neues Master-Layout" className="w-[60px]">
          <Icon box="0 0 40 36" className="w-10 h-9">
            <path d="M31 13H2Q1 13 1 14V34Q1 35 2 35H31Z" fill="#8f9597" />
            <path d="M19 35V27H31V35M19 31H31" fill="#fff" />
            <PlusBadge />
          </Icon>
        </button>
        <button aria-label="Neuer Untersatz" className="w-[64px]">
          <Icon box="0 0 40 36" className="w-10 h-9">
            <path d="M31 20V34Q31 35 30 35H2Q1 35 1 34V13Q1 11 3 11H9L14 17H20M1 17H14" />
            <PlusBadge />
          </Icon>
        </button>
        <button aria-label="Layout-Einstellungen" className="w-[60px] text-[#427ffb]">
          <Icon box="0 0 28 22" className="w-7 h-[22px]">
            <rect x="1" y="1" width="26" height="20" rx="2" />
            <path d="M6 8H7M12 8H21M6 14H7M12 14H21" />
          </Icon>
        </button>
        <button aria-label="Aktualisieren" className="w-[61px] text-[#4ea655]">
          <Icon box="0 0 30 30" className="w-[30px] h-[30px]">
            <circle cx="15" cy="15" r="14" />
            <path d="M7 14Q8 8 16 9M13 5L17 9L13 13M23 16Q22 22 14 21M17 17L13 21L17 25" />
          </Icon>
        </button>
        <button aria-label="Löschen" className="text-[#f0502e]">
          <Icon box="0 0 26 28" className="w-[26px] h-7"><path d="M2 2L24 26M24 3L2 25" strokeWidth="3.5" /></Icon>
        </button>
      </div>
      <button className="ml-1 flex h-[42px] shrink-0 items-center gap-4 rounded-l-lg bg-[#d5d5d5] pl-[11px]">
        <Icon box="0 0 18 14" className="w-[18px] h-3.5">
          <path d="M0 0H18L9 14Z" fill="#8f9597" stroke="none" />
        </Icon>
        Beschreibungen
      </button>
      <div className="mt-2 flex h-[34px] shrink-0 items-center pl-2">
        <SheetIcon className="h-[22px] w-[26px]" />
        <input aria-label="Layout-ID" defaultValue="A-1.1.2" className="ml-3 h-[34px] w-[73px] border border-[#d8d8d8] border-b-[#aaa] bg-white pl-1.5" />
        <input aria-label="Layoutname" defaultValue="Grundriss EG" className="ml-2 h-[34px] min-w-0 flex-1 border border-r-0 border-[#d8d8d8] border-b-[#aaa] bg-white pl-1.5" />
      </div>
      <div className="relative mt-1.5 flex h-9 shrink-0 items-center pl-2">
        <SheetIcon filled className="h-[22px] w-[26px]" />
        <select aria-label="Master-Layout" className="ml-3 h-9 min-w-0 flex-1 appearance-none rounded-lg bg-white pl-[7px] shadow">
          <option>A2 Querformat</option>
          <option>A1 Querformat</option>
        </select>
        <span className="pointer-events-none absolute right-1"><Chevron /></span>
      </div>
      <div className="mt-1 flex h-10 shrink-0 items-center gap-2 pl-2.5">
        <Icon box="0 0 26 26" className="w-[26px] h-[26px]">
          <path d="M1 12H13V24H1ZM1 3H13M4 0L1 3L4 6M10 0L13 3L10 6M22 12V24M19 15L22 12L25 15M19 21L22 24L25 21" />
        </Icon>
        594 / 420
      </div>
      <div className="flex h-11 shrink-0 items-center pl-1.5 text-[#28333a]">
        <Icon box="0 0 28 20" className="w-7 h-5">
          <path d="M5 1H25Q27 1 27 3V17Q27 19 25 19H5Q3 19 3 17V3Q3 1 5 1ZM15 1V19M19 1V19M0 5H7M0 10H7M0 15H7" />
        </Icon>
      </div>
      <button className="-mr-1.5 ml-1.5 mt-0.5 h-10 shrink-0 rounded-lg bg-white pr-2 shadow">Einstellungen...</button>
      <div className="mt-2 flex h-[19px] shrink-0 items-center justify-center border-t-2 border-[#e2e2e2] pl-2">
        <span className="h-0.5 w-[140px] bg-[#a8a8a8]" />
      </div>
      <div className="flex h-[57px] shrink-0 gap-1 pl-1.5">
        <button aria-label="Transparentpause" className="flex w-14 items-center justify-center rounded-lg bg-white text-[#28333a] shadow">
          <Icon>
            <path d="M31 7H33Q35 7 35 9V33Q35 35 33 35H9Q7 35 7 33V32" stroke={BLUE} />
            <rect x="1" y="1" width="28" height="28" rx="2" strokeWidth="2.5" />
            <path d="M7 21V7H21" stroke="#999" />
          </Icon>
        </button>
        <button aria-label="Referenz wählen" disabled className="-mr-1.5 flex flex-1 items-center justify-end rounded-lg bg-[#f6f6f6] pr-2.5 text-[#999] shadow-sm">
          <Chevron />
        </button>
      </div>
      <div className="flex h-[78px] shrink-0 items-center justify-between border-b-2 border-[#d0d0d0] pb-1.5 pl-4 pr-2 text-[#8f9395]">
        <button aria-label="Tauschen" className="mr-16">
          <Icon>
            <path d="M27 13H33Q35 13 35 15V33Q35 35 33 35H15Q13 35 13 33V27" stroke="#a0b8f3" />
            <path d="M24 12V3Q24 1 22 1H3Q1 1 1 3V21Q1 23 3 23H12M9 9L27 27M9 15V9H15M27 21V27H21" />
          </Icon>
        </button>
        <button aria-label="Verschieben">
          <Icon>
            <path d="M25 10V3Q25 1 23 1H3Q1 1 1 3V21Q1 23 3 23H10" stroke="#a0b8f3" />
            <path d="M24 13V34M13 23H35M20 16L24 12L28 16M20 30L24 34L28 30M17 19L13 23L17 27M31 19L35 23L31 27" />
          </Icon>
        </button>
        <button aria-label="Drehen">
          <Icon>
            <path d="M27 15L20 2L2 11L11 30L17 28" stroke="#a0b8f3" />
            <path d="M19 28Q31 29 32 15M22 24L18 28L22 32M28 19L32 14L36 19" />
          </Icon>
        </button>
        <button aria-label="Zurücksetzen">
          <Icon>
            <path d="M24 8V3Q24 1 22 1H3Q1 1 1 3V19Q1 21 3 21H22M27 9H35V30H13V24" stroke="#a0b8f3" />
            <path d="M30 24Q30 12 15 12M20 7L14 12L20 17" />
          </Icon>
        </button>
        <button aria-label="Neu aufbauen">
          <Icon>
            <circle cx="18" cy="18" r="16" />
            <path d="M8 17Q12 8 23 12M19 7L24 12L18 15M28 19Q24 28 13 24M17 29L12 24L18 21" />
          </Icon>
        </button>
      </div>
      <label htmlFor="ref" className="h-[52px] shrink-0 pl-1 pt-2.5 text-[22px] leading-8 text-[#7c7c7c]">Transparentpause:</label>
      <div className="flex h-[58px] shrink-0 gap-2 pl-1.5">
        <button aria-label="Farbe der Referenz" className="flex w-14 shrink-0 items-center justify-center gap-2.5 rounded-lg bg-[#f6f6f6] text-[#999] shadow-sm">
          <span className="h-6 w-6 bg-[#f19b8e]" />
          <Chevron />
        </button>
        <OpacitySlider id="ref" label="Transparentpause" />
        <button aria-label="Weitere Optionen" className="-ml-0.5 flex w-10 shrink-0 items-center rounded-lg bg-[#f6f6f6] pl-2 text-[#999] shadow-sm">
          <Chevron />
        </button>
      </div>
      <label htmlFor="act" className="h-12 shrink-0 pl-1 pt-1.5 text-[22px] leading-8 text-[#7c7c7c]">Aktiv:</label>
      <div className="flex h-[58px] shrink-0 gap-2 pl-1.5">
        <button aria-label="Farbe der aktiven Ansicht" className="flex w-14 shrink-0 items-center justify-center gap-2.5 rounded-lg bg-[#f6f6f6] text-[#999] shadow-sm">
          <Icon box="0 0 26 26" className="w-[26px] h-[26px]">
            <path d="M13 13V1A12 12 0 0 1 24 19Z" fill="#f19b8e" />
            <path d="M13 13L24 19A12 12 0 0 1 2 19Z" fill="#a0b8f3" />
            <path d="M13 13L2 19A12 12 0 0 1 13 1Z" fill="#9fcba4" />
          </Icon>
          <Chevron />
        </button>
        <OpacitySlider id="act" label="Aktiv" />
      </div>
      <div className="mt-3 flex min-h-0 flex-1 items-center gap-6 border-t-2 border-[#d0d0d0] pl-[76px] text-[#8f9395]">
        <button aria-label="Ziehen">
          <Icon>
            <path d="M23 7V3Q23 1 21 1H3Q1 1 1 3V22Q1 24 3 24H10" stroke="#a0b8f3" />
            <path d="M20 35Q18 30 14 25L17 23L20 26V14H23V21M23 14V11H27V21M27 12H31V22M31 18L35 19L31 35" />
          </Icon>
        </button>
        <button aria-label="Überlagern">
          <Icon>
            <path d="M22 8V3Q22 1 20 1H5Q3 1 3 3V19Q3 21 5 21H9M22 14V21H16" />
            <rect x="13" y="12" width="20" height="20" rx="2" stroke="#a0b8f3" />
          </Icon>
        </button>
        <button aria-label="Teilen">
          <Icon>
            <path d="M22 6H35V30H22" stroke="#a0b8f3" />
            <path d="M14 6H2V30H14M18 2V34M14 13L10 18L14 23M22 13L26 18L22 23" />
          </Icon>
        </button>
        <button aria-label="Füllungen ausblenden">
          <Icon>
            <path d="M7 24H5Q3 24 3 22V3Q3 1 5 1H24Q26 1 26 3V12M4 10L13 2M4 18L20 3M10 22L25 8M11 25Q22 14 34 25Q22 35 11 25ZM12 33L34 17" />
          </Icon>
        </button>
      </div>
    </aside>
  );
}

export default function App() {
  return (
    <div className="flex h-screen flex-col overflow-hidden bg-[#ececec] font-['Inter','Liberation_Sans',sans-serif] text-[#222]">
      <Toolbar />
      <InfoBar />
      <div className="flex min-h-0 flex-1">
        <ToolBox />
        <main className="flex min-w-0 flex-1 flex-col">
          <Tabs />
          <div className="min-h-0 flex-1 overflow-hidden">
            <Plan />
          </div>
          <ViewBar />
        </main>
        <Navigator />
      </div>
      <footer className="flex h-[42px] shrink-0 items-center justify-between border-t border-[#dcdcdc] bg-gradient-to-b from-[#e9e9e9] to-[#d9d9d9] pl-3 pr-4">
        <p className="whitespace-nowrap text-[22px]">
          Klicken Sie mit dem Cursor auf ein Element oder ziehen Sie einen Auswahlbereich auf. Drücken Sie für Morphbearbeitung Strg/Ctrl+Umsch, um zwischen Element-/Unterelement-Auswahl zu wechseln.
        </p>
        <div className="flex items-center text-[#28333a]">
          <Icon box="0 0 32 28" className="w-8 h-7">
            <path d="M3 18H1V1H25V6" />
            <path d="M1 2H25" strokeWidth="3" />
            <rect x="7" y="9" width="24" height="17" />
            <path d="M7 11H31" strokeWidth="4" />
          </Icon>
          <span className="ml-5 mr-[22px] h-[30px] w-0.5 bg-[#999]" />
          <span className="font-['Lato',sans-serif] text-[26px] font-semibold leading-8">
            GRAPHISOFT <span className="font-light">ID</span>
          </span>
        </div>
      </footer>
    </div>
  );
}
